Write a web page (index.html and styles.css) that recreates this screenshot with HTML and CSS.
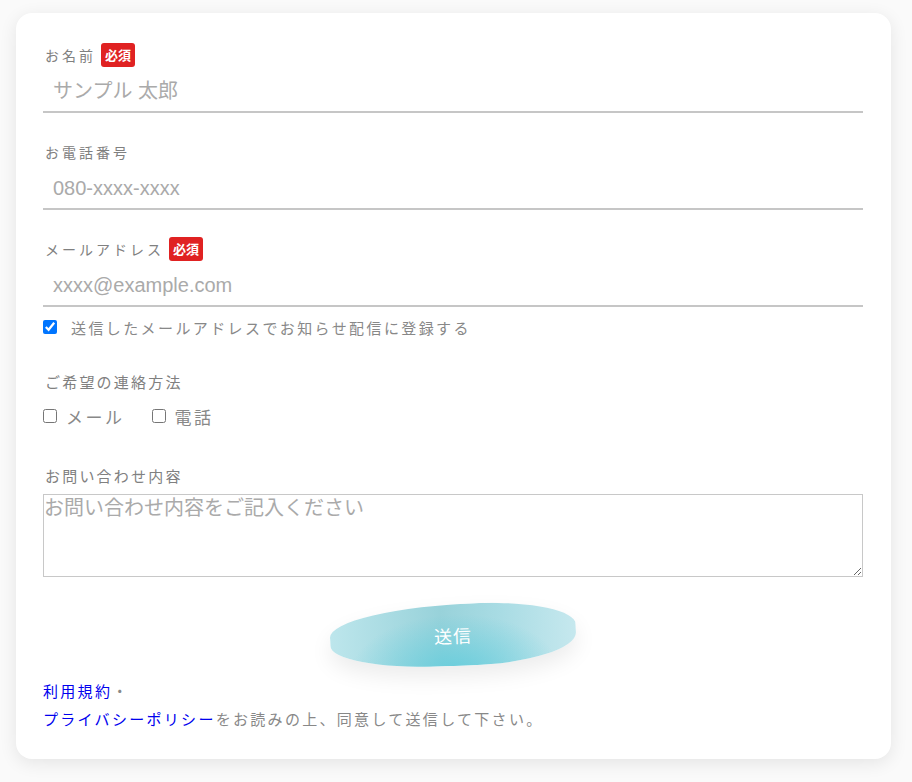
FILE: index.html
```html
<!DOCTYPE html>
<html lang="ja">
<head>
    <meta charset="UTF-8">
    <meta name="viewport" content="width=device-width, initial-scale=1.0">
    <title>お問い合わせ</title>
    <link rel="stylesheet" href="styles.css">
</head>
<body>
    <div class="card">
        <form class="contact-form" onsubmit="return false;">
            <div class="field">
                <div class="label">お名前 <span class="required">必須</span></div>
                <input class="line-input" type="text" placeholder="サンプル 太郎">
            </div>

            <div class="field">
                <div class="label">お電話番号</div>
                <input class="line-input" type="tel" placeholder="080-xxxx-xxxx">
            </div>

            <div class="field field-mail">
                <div class="label">メールアドレス <span class="required">必須</span></div>
                <input class="line-input" type="email" placeholder="xxxx@example.com">
                <label class="check-line">
                    <input type="checkbox" checked>
                    <span>送信したメールアドレスでお知らせ配信に登録する</span>
                </label>
            </div>

            <div class="field field-method">
                <div class="label label-lg">ご希望の連絡方法</div>
                <div class="methods">
                    <label class="method"><input type="checkbox"> <span>メール</span></label>
                    <label class="method"><input type="checkbox"> <span>電話</span></label>
                </div>
            </div>

            <div class="field field-message">
                <div class="label label-lg">お問い合わせ内容</div>
                <textarea class="message" placeholder="お問い合わせ内容をご記入ください"></textarea>
            </div>

            <div class="submit-row">
                <button class="submit" type="submit">送信</button>
            </div>

            <p class="terms">
                <a href="#">利用規約</a>・<br>
                <a href="#">プライバシーポリシー</a>をお読みの上、同意して送信して下さい。
            </p>
        </form>
    </div>
</body>
</html>
```

FILE: styles.css
```css
body {
    font-family: 'Noto Sans CJK JP', 'Noto Sans', sans-serif;
    margin: 0;
    padding: 13px 21px 23px 16px;
    background-color: #fafafa;
    color: #888;
}
.card {
    background: #ffffff;
    border-radius: 16px;
    box-shadow: 0 4px 18px rgba(0, 0, 0, 0.09);
    padding: 30px 28px 26px 27px;
}
.field {
    margin-bottom: 27px;
}
.label {
    display: flex;
    align-items: center;
    height: 24px;
    font-size: 14px;
    letter-spacing: 3px;
    color: #808080;
    padding-left: 2px;
}
.label-lg {
    font-size: 15px;
    letter-spacing: 2.2px;
}
.required {
    display: inline-block;
    margin-left: 5px;
    padding: 0 4px;
    height: 24px;
    line-height: 24px;
    background: #e02222;
    color: #fff;
    font-size: 13px;
    font-weight: bold;
    letter-spacing: 0;
    border-radius: 3px;
}
.line-input {
    display: block;
    width: 100%;
    box-sizing: border-box;
    height: 46px;
    padding: 4px 10px 0;
    border: none;
    border-bottom: 2px solid #c6c6c6;
    font-family: 'Liberation Sans', 'Noto Sans CJK JP', sans-serif;
    font-size: 20px;
    color: #555;
    outline: none;
}
.line-input::placeholder, .message::placeholder {
    color: #aaa;
}
.field-mail {
    margin-bottom: 22px;
}
.check-line {
    display: flex;
    align-items: center;
    height: 40px;
    font-size: 15px;
    letter-spacing: 2.4px;
    color: #888;
}
.check-line input {
    margin: 0 14px 0 0;
    width: 14px;
    height: 14px;
}
.field-method {
    margin-bottom: 24px;
}
.methods {
    display: flex;
    align-items: center;
    height: 46px;
    gap: 27px;
}
.method {
    display: flex;
    align-items: center;
    font-size: 17px;
    letter-spacing: 2.5px;
    color: #888;
}
.method input {
    margin: 0 9px 0 0;
    width: 14px;
    height: 14px;
}
.field-message {
    margin-bottom: 25px;
}
.field-message .label {
    margin-bottom: 7px;
}
.message {
    display: block;
    width: 100%;
    box-sizing: border-box;
    height: 83px;
    padding: 0;
    border: 1px solid #c8c8c8;
    font-family: 'Noto Sans CJK JP', sans-serif;
    font-size: 20px;
    line-height: 1.2;
    resize: vertical;
    outline: none;
}
.submit-row {
    display: flex;
    justify-content: center;
    padding-top: 2px;
}
.submit {
    width: 246px;
    height: 62px;
    border: none;
    border-radius: 70% 45% 50% 50% / 55% 45% 55% 45%;
    background:
        radial-gradient(ellipse at 50% 110%, rgba(100, 205, 220, 0.9), rgba(100, 205, 220, 0) 60%),
        linear-gradient(90deg, #bde6ec 0%, #98d2da 45%, #a9dce4 70%, #c6e8ee 100%);
    box-shadow: 0 10px 22px rgba(0, 0, 0, 0.08);
    color: #fff;
    font-family: 'Noto Sans CJK JP', sans-serif;
    font-size: 18px;
    letter-spacing: 1px;
    cursor: pointer;
    transform: rotate(-2deg);
}
.terms {
    margin: 11px 0 0;
    font-size: 15px;
    line-height: 28px;
    letter-spacing: 2.3px;
    color: #888;
}
.terms a {
    color: #0000ee;
    text-decoration: none;
}
```
